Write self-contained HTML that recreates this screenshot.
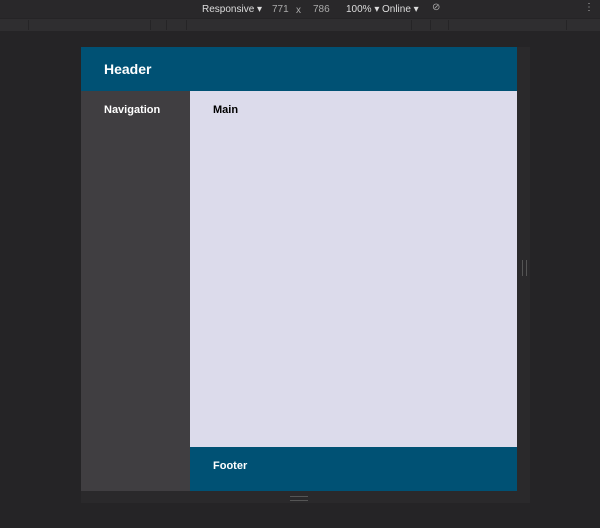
<!DOCTYPE html><html><head><style>
body{margin:0;width:600px;height:528px;background:#252426;font-family:"Liberation Sans",sans-serif;position:relative;overflow:hidden}
.a{position:absolute}
.tb{font-size:10px;color:#ddd}
.s{position:absolute;top:20px;height:10px;border-right:1px solid #252426}
</style></head><body>
<div class="a" style="left:0;top:0;width:600px;height:18px;background:#29282a"></div>
<div class="a tb" style="left:202px;top:4px">Responsive ▾</div>
<div class="a tb" style="left:272px;top:4px;color:#aaa">771</div>
<div class="a tb" style="left:296px;top:5px;color:#aaa">x</div>
<div class="a tb" style="left:313px;top:4px;color:#aaa">786</div>
<div class="a tb" style="left:346px;top:4px">100% ▾</div>
<div class="a tb" style="left:382px;top:4px">Online ▾</div>
<div class="a tb" style="left:432px;top:2px;color:#aaa">⊘</div>
<div class="a tb" style="left:584px;top:2px;color:#aaa">⋮</div>
<div class="a" style="left:0;top:19px;width:600px;height:12px;background:#2f2e30"></div>
<div class="s" style="left:0;width:28px"></div>
<div class="s" style="left:29px;width:121px"></div>
<div class="s" style="left:151px;width:15px"></div>
<div class="s" style="left:167px;width:19px"></div>
<div class="s" style="left:187px;width:224px"></div>
<div class="s" style="left:412px;width:18px"></div>
<div class="s" style="left:431px;width:17px"></div>
<div class="s" style="left:449px;width:117px"></div>
<div class="a" style="left:81px;top:47px;width:449px;height:456px;background:#2a292b"></div>
<div class="a" style="left:81px;top:47px;width:436px;height:44px;background:#005174"></div>
<div class="a" style="left:104px;top:61px;color:#fff;font-weight:bold;font-size:14px">Header</div>
<div class="a" style="left:81px;top:91px;width:109px;height:400px;background:#403e41"></div>
<div class="a" style="left:104px;top:104px;color:#fff;font-weight:bold;font-size:11px">Navigation</div>
<div class="a" style="left:190px;top:91px;width:327px;height:356px;background:#dcdbeb"></div>
<div class="a" style="left:213px;top:104px;color:#000;font-weight:bold;font-size:11px">Main</div>
<div class="a" style="left:190px;top:447px;width:327px;height:44px;background:#005174"></div>
<div class="a" style="left:213px;top:460px;color:#fff;font-weight:bold;font-size:11px">Footer</div>
<div class="a" style="left:290px;top:496px;width:18px;height:3px;border-top:1px solid #555;border-bottom:1px solid #555"></div>
<div class="a" style="left:522px;top:260px;width:3px;height:16px;border-left:1px solid #555;border-right:1px solid #555"></div>
</body></html>
